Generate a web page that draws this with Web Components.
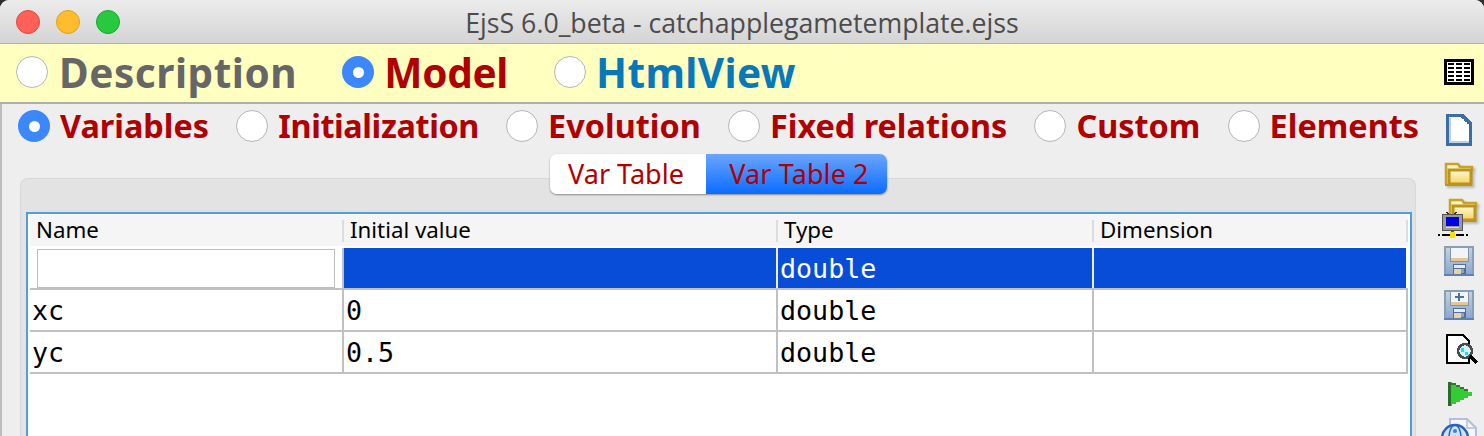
<!DOCTYPE html>
<html>
<head>
<meta charset="utf-8">
<title>EjsS</title>
<style>
  html, body { margin: 0; padding: 0; height: 436px; overflow: hidden; background: #2e2e2e; }
  ejs-window { height: 436px; }
</style>
</head>
<body>
<ejs-window>
  <title-bar>EjsS 6.0_beta - catchapplegametemplate.ejss</title-bar>
  <top-tabs></top-tabs>
  <main-area>
    <sub-tabs></sub-tabs>
    <var-panel>
      <var-table></var-table>
    </var-panel>
    <tool-strip slot="tools"></tool-strip>
  </main-area>
</ejs-window>

<script>
class EjsWindow extends HTMLElement {
  connectedCallback() {
    this.attachShadow({ mode: 'open' }).innerHTML = `
      <style>
        :host { display: flex; flex-direction: column; width: 1484px; overflow: hidden; background: #eee; border-radius: 9px 9px 0 0; }
      </style>
      <slot></slot>`;
  }
}

class TitleBar extends HTMLElement {
  connectedCallback() {
    this.attachShadow({ mode: 'open' }).innerHTML = `
      <style>
        :host { display: block; height: 44px; flex: none; box-sizing: border-box; position: relative;
          background: linear-gradient(#ececec, #d4d4d4); border-bottom: 1px solid #b1b1b1; }
        .dots { position: absolute; left: 16px; top: 10px; display: flex; gap: 16px; }
        .dots i { width: 24px; height: 24px; border-radius: 50%; box-sizing: border-box; border: 1px solid; }
        .r { background: #ff6159; border-color: #e2463f !important; }
        .y { background: #ffbd2e; border-color: #e1a116 !important; }
        .g { background: #28c93f; border-color: #12ac28 !important; }
        .t { height: 43px; padding-top: 1px; box-sizing: border-box; display: flex; align-items: center; justify-content: center;
          font: 26.7px "Open Sans", sans-serif; color: #4c4c4c; }
      </style>
      <div class="dots"><i class="r"></i><i class="y"></i><i class="g"></i></div>
      <div class="t"><slot></slot></div>`;
  }
}

class EjsRadio extends HTMLElement {
  connectedCallback() {
    const on = this.hasAttribute('checked');
    this.attachShadow({ mode: 'open' }).innerHTML = `
      <style>
        :host { display: inline-flex; align-items: center; gap: var(--radio-gap, 11px); font-weight: bold; white-space: nowrap; }
        .dot { width: 32px; height: 32px; box-sizing: border-box; border-radius: 50%; flex: none;
          display: flex; align-items: center; justify-content: center; }
        .off { background: #fff; border: 1px solid #b5b5b5; }
        .on { background: #3b87fb; }
        .on::after { content: ""; width: 11px; height: 11px; background: #fff; border-radius: 50%; }
        .label { padding-bottom: var(--label-lift, 0); padding-top: var(--label-drop, 0); }
      </style>
      <span class="dot ${on ? 'on' : 'off'}"></span><span class="label"><slot></slot></span>`;
  }
}

class TopTabs extends HTMLElement {
  connectedCallback() {
    this.attachShadow({ mode: 'open' }).innerHTML = `
      <style>
        :host { display: flex; align-items: center; height: 60px; flex: none; box-sizing: border-box; padding: 0 10px 2px 16px;
          background: #ffffc0; border-bottom: 2px solid #aeaeae; font: bold 40.5px/50px "Noto Sans", sans-serif; --label-drop: 2px; }
        ejs-radio { margin-right: 45px; }
        .d { color: #666; letter-spacing: .55px; }
        .m { color: #b00000; letter-spacing: -.3px; margin-right: 46px; --radio-gap: 10px; }
        .h { color: #0878b8; letter-spacing: .4px; --radio-gap: 10px; }
        .grow { flex: 1; }
        svg { display: block; }
      </style>
      <ejs-radio class="d">Description</ejs-radio>
      <ejs-radio class="m" checked>Model</ejs-radio>
      <ejs-radio class="h">HtmlView</ejs-radio>
      <span class="grow"></span>
      <svg width="30" height="26" viewBox="0 0 30 26" shape-rendering="crispEdges">
        <rect width="30" height="26" fill="#000"/>
        <rect x="3" y="3" width="24" height="20" fill="#fff"/>
        <path d="M4 4h6v2H4zM12 4h6v2h-6zM20 4h6v2h-6zM4 8h6v2H4zM12 8h6v2h-6zM20 8h6v2h-6zM4 12h6v2H4zM12 12h6v2h-6zM20 12h6v2h-6zM4 16h6v2H4zM12 16h6v2h-6zM20 16h6v2h-6zM4 20h6v2H4zM12 20h6v2h-6zM20 20h6v2h-6z" fill="#000"/>
      </svg>`;
  }
}

class MainArea extends HTMLElement {
  connectedCallback() {
    this.attachShadow({ mode: 'open' }).innerHTML = `
      <style>
        :host { display: grid; grid-template-columns: 1fr 66px; flex: 1; min-height: 0; border-left: 2px solid #bdbdbd; overflow: hidden; }
        .left { min-width: 0; display: flex; flex-direction: column; }
        .right { overflow: hidden; }
      </style>
      <div class="left"><slot></slot></div>
      <div class="right"><slot name="tools"></slot></div>`;
  }
}

class SubTabs extends HTMLElement {
  connectedCallback() {
    this.attachShadow({ mode: 'open' }).innerHTML = `
      <style>
        :host { display: flex; align-items: center; gap: 27.2px; height: 44px; flex: none; box-sizing: border-box;
          padding: 0 0 0 16px; font: bold 32.4px/40px "Noto Sans", sans-serif; color: #b00000; --radio-gap: 10px; --label-lift: 2px; }
        .tight { letter-spacing: -.4px; }
      </style>
      <ejs-radio checked>Variables</ejs-radio>
      <ejs-radio class="tight">Initialization</ejs-radio>
      <ejs-radio>Evolution</ejs-radio>
      <ejs-radio>Fixed relations</ejs-radio>
      <ejs-radio>Custom</ejs-radio>
      <ejs-radio>Elements</ejs-radio>`;
  }
}

class VarPanel extends HTMLElement {
  connectedCallback() {
    this.attachShadow({ mode: 'open' }).innerHTML = `
      <style>
        :host { display: block; position: relative; flex: 1; min-height: 0; margin: 30px 2px 0 18px;
          background: #e3e3e3; border: 1px solid #d8d8d8; border-bottom: 0; border-radius: 8px 8px 0 0; padding: 33px 3px 0 5px; }
        .seg { position: absolute; top: -25px; left: 529px; display: flex; height: 40px;
          font: 27px "Noto Sans", sans-serif; color: #b00000; border-radius: 7px; overflow: hidden;
          box-shadow: 0 1px 2px rgba(0,0,0,.4); }
        .seg span { display: flex; align-items: center; justify-content: center; box-sizing: border-box; padding-bottom: 2px; }
        .a { width: 156px; background: #fff; padding-right: 4px; }
        .b { width: 181px; background: linear-gradient(#6ba5ff, #0a6cff); padding-left: 5px; letter-spacing: .1px; }
      </style>
      <div class="seg"><span class="a">Var Table</span><span class="b">Var Table 2</span></div>
      <slot></slot>`;
  }
}

class VarTable extends HTMLElement {
  connectedCallback() {
    const rows = [['xc', '0', 'double', ''], ['yc', '0.5', 'double', '']];
    const cell = (t) => `<div class="c">${t}</div>`;
    this.attachShadow({ mode: 'open' }).innerHTML = `
      <style>
        :host { display: block; height: 240px; box-sizing: border-box; border: 2px solid #4f9fe0; border-bottom: 0; background: #fff; padding: 1px 2px 0 2px; }
        .row { display: grid; grid-template-columns: 314px 434px 316px 314px; }
        .head { height: 31px; margin-bottom: 2px; background: #f5f5f5; font: 22.3px/29px "Noto Sans", sans-serif; color: #000; }
        .head div { padding: 0 0 0 6px; position: relative; }
        .head div + div::before { content: ""; position: absolute; left: -2px; top: 5px; height: 22px; width: 2px; background: #dcdcdc; }
        .head div:last-child::after { content: ""; position: absolute; right: 0; top: 5px; height: 22px; width: 2px; background: #dcdcdc; }
        .body .row { height: 42px; grid-auto-rows: 40px; box-sizing: border-box; border-bottom: 2px solid #c0c0c0; }
        .c { font: 26.67px/42px "DejaVu Sans Mono", monospace; color: #000; padding-left: 2px; border-right: 2px solid #c0c0c0; white-space: pre; }
        .sel .c { background: #084dd8; color: #fff; border-right-color: #eef; }
        .sel .c:last-child { border-right-color: #fff; }
        .edit { padding: 1px 7px 0 7px; border-right: 2px solid #c0c0c0; }
        .edit div { height: 39px; box-sizing: border-box; border: 1px solid #bdbdbd; background: #fff; }
      </style>
      <div class="row head"><div>Name</div><div>Initial value</div><div>Type</div><div>Dimension</div></div>
      <div class="body">
        <div class="row sel"><div class="edit"><div></div></div>${cell('')}${cell('double')}${cell('')}</div>
        ${rows.map(r => `<div class="row">${r.map(cell).join('')}</div>`).join('')}
      </div>`;
  }
}

const disk = (plus) => `
  <svg width="30" height="30" viewBox="0 0 30 30" shape-rendering="crispEdges">
    <rect width="30" height="30" fill="url(#dk)"/>
    <path d="M0 0h30v2H0zM0 0h2v30H0zM28 0h2v30h-2z" fill="#8a9fb3"/>
    <rect y="28" width="30" height="2" fill="#5f7fb5"/>
    <rect x="7" y="2" width="17" height="10" fill="#f2f5f8"/>
    <rect x="7" y="12" width="17" height="3" fill="#e3c894"/>
    <path d="M6 2v14h19V2h-1v13H7V2z" fill="#7f95a8"/>
    ${plus ? '<path d="M15 3v8M11 7h9" stroke="#4f6f9f" stroke-width="2"/>' : ''}
    <rect x="9" y="18" width="13" height="10" fill="#4f6f9f"/>
    <rect x="10" y="19" width="11" height="3" fill="#e4ebf3"/>
    <rect x="10" y="23" width="7" height="5" fill="#e8d2a6"/>
    <rect x="17" y="23" width="3" height="4" fill="#98a59c"/>
  </svg>`;

const folder = `
  <path d="M2 22V2h12l2 3h12v4" fill="#fff6c0" stroke="#c9a227" stroke-width="2.5"/>
  <rect x="5" y="8" width="22" height="14" fill="url(#fo)" stroke="#bd931a" stroke-width="3"/>
  <path d="M1 23h27" stroke="#bd931a" stroke-width="2"/>`;

class ToolStrip extends HTMLElement {
  connectedCallback() {
    this.attachShadow({ mode: 'open' }).innerHTML = `
      <style>
        :host { display: flex; flex-direction: column; align-items: flex-start; height: 332px; box-sizing: border-box; padding: 10px 0 0 26px; position: relative; }
        svg { display: block; flex: none; }
        .doc { margin-left: 2px; }
        .folder { margin-top: 16px; filter: drop-shadow(2px 2px 1px rgba(0,0,0,.22)); }
        .folder2 { margin-top: 12px; margin-left: 4px; filter: drop-shadow(2px 2px 1px rgba(0,0,0,.22)); }
        .net { position: absolute; left: 20px; top: 108px; }
        .d1 { margin-top: 24px; }
        .d2 { margin-top: 14px; }
        .view { margin-top: 14px; margin-left: 2px; }
        .play { margin-top: 18px; margin-left: 4px; }
        .web { margin-top: 12px; margin-left: -4px; }
      </style>
      <svg width="0" height="0" style="position:absolute">
        <defs>
          <linearGradient id="dk" x1="0" y1="0" x2="0" y2="1">
            <stop offset="0" stop-color="#c9d5df"/><stop offset="1" stop-color="#86a3d2"/>
          </linearGradient>
          <linearGradient id="fo" x1="0" y1="0" x2="0" y2="1">
            <stop offset="0" stop-color="#fffbd8"/><stop offset="1" stop-color="#f6d35f"/>
          </linearGradient>
        </defs>
      </svg>
      <svg class="doc" width="26" height="32" viewBox="0 0 26 32" shape-rendering="crispEdges">
        <path d="M1.5 1.5h15l8 8v21h-23z" fill="#fff" stroke="#3a6ea5" stroke-width="3"/>
        <path d="M4 4v24h19" fill="none" stroke="#bcd0e8" stroke-width="2"/>
        <path d="M16 3l7 7" stroke="#3a6ea5" stroke-width="2" stroke-dasharray="2 2"/>
      </svg>
      <svg class="folder" width="30" height="24" viewBox="0 0 30 24">${folder}</svg>
      <svg class="folder2" width="30" height="24" viewBox="0 0 30 24">${folder}</svg>
      <svg class="net" width="34" height="26" viewBox="0 0 34 26" shape-rendering="crispEdges">
        <path d="M8 0l5 4M19 0l-5 4" stroke="#222" stroke-width="1.5" fill="none"/>
        <rect x="4" y="2" width="21" height="17" fill="#9b9b9b"/>
        <path d="M4 2h21v17H4zM5 3v15h19V3z" fill="#555" fill-rule="evenodd"/>
        <rect x="8" y="5" width="13" height="9" fill="#0000e0"/>
        <rect x="8" y="15" width="13" height="1" fill="#d8d8d8"/>
        <rect x="13" y="19" width="3" height="3" fill="#555"/>
        <path d="M0 23h2M4 23h8M18 23h8M28 23h2" stroke="#000" stroke-width="2"/>
        <rect x="12" y="20" width="5" height="6" fill="#ffe000"/>
      </svg>
      <div class="d1">${disk(false)}</div>
      <div class="d2">${disk(true)}</div>
      <svg class="view" width="32" height="30" viewBox="0 0 32 30" shape-rendering="crispEdges">
        <path d="M1 1h16l6 6v22H1z" fill="#fff" stroke="#000" stroke-width="2"/>
        <circle cx="19" cy="17" r="7" fill="#d8f0f0" stroke="#4a4a4a" stroke-width="2.5"/>
        <rect x="15" y="14" width="3" height="4" fill="#00e8ff"/>
        <rect x="19" y="18" width="3" height="3" fill="#00e8ff"/>
        <path d="M24 22l7 7" stroke="#000" stroke-width="3"/>
      </svg>
      <svg class="play" width="24" height="24" viewBox="0 0 24 24" shape-rendering="crispEdges">
        <path d="M1 0h3v2h4v2h4v2h4v2h4v2h4v4h-4v2h-4v2h-4v2H8v2H4v2H1z" fill="#33cc33"/>
        <rect x="0" y="0" width="3" height="24" fill="#2d6a2d"/>
        <path d="M3 1h5v2H3zM8 3h4v2H8zM12 5h4v2h-4zM16 7h4v2h-4z" fill="#2d7a2d"/>
      </svg>
      <svg class="web" width="40" height="20" viewBox="0 0 40 20">
        <path d="M10 1h17l9 9v12H10z" fill="#f5f6fb" stroke="#b4bed6" stroke-width="2"/>
        <path d="M27 1v9h9" fill="none" stroke="#b4bed6" stroke-width="1.5"/>
        <circle cx="15" cy="20" r="13" fill="#cfe2f8" stroke="#2a62b8" stroke-width="2.5"/>
        <ellipse cx="15" cy="20" rx="6" ry="13" fill="none" stroke="#2a62b8" stroke-width="1.5"/>
        <circle cx="15" cy="13" r="2" fill="#2a8ae0"/>
      </svg>`;
  }
}

customElements.define('ejs-window', EjsWindow);
customElements.define('title-bar', TitleBar);
customElements.define('ejs-radio', EjsRadio);
customElements.define('top-tabs', TopTabs);
customElements.define('main-area', MainArea);
customElements.define('sub-tabs', SubTabs);
customElements.define('var-panel', VarPanel);
customElements.define('var-table', VarTable);
customElements.define('tool-strip', ToolStrip);
</script>
</body>
</html>
